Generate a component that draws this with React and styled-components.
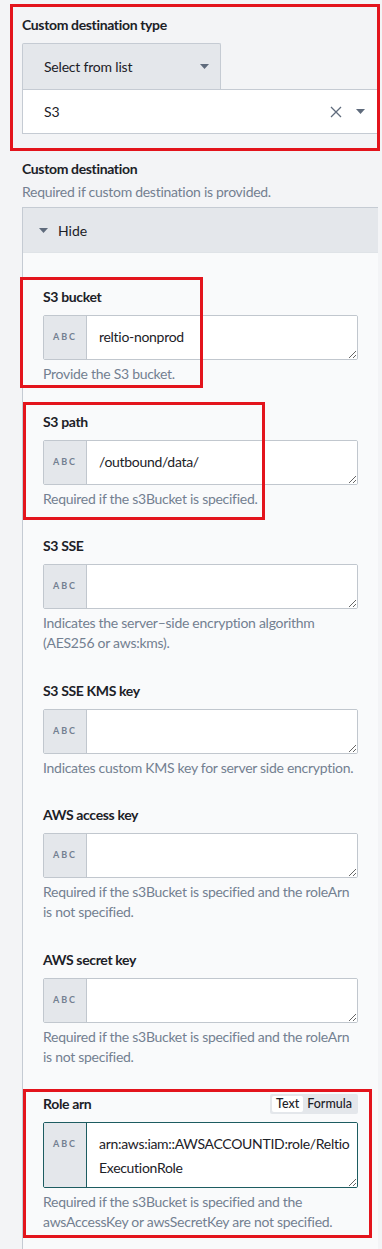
import React from "react";
import styled, { createGlobalStyle } from "styled-components";

const GlobalStyle = createGlobalStyle`
  html, body {
    margin: 0;
    padding: 0;
    background: #f3f4f6;
    font-family: "Lato", "Noto Sans", sans-serif;
    color: #1c2127;
  }
`;

const Page = styled.div`
  width: 356px;
  padding: 15px 4px 0 22px;
`;

// red annotation frame laid over a block, offsets come from props
const Marked = styled.div`
  position: relative;
  &::after {
    content: "";
    position: absolute;
    pointer-events: none;
    left: ${(p) => p.left}px;
    top: ${(p) => p.top}px;
    width: ${(p) => p.w}px;
    height: ${(p) => p.h}px;
    border: 3px solid #e3141c;
    box-sizing: border-box;
  }
`;

const Label = styled.div`
  font-size: 14px;
  font-weight: 700;
  line-height: 20px;
  letter-spacing: -0.35px;
  color: #1c2127;
`;

const LabelRow = styled.div`
  display: flex;
  align-items: center;
  justify-content: space-between;
`;

const Helper = styled.div`
  margin-top: ${(p) => p.gap ?? 4}px;
  font-size: 14px;
  line-height: 20px;
  letter-spacing: -0.28px;
  color: #738091;
`;

const SelectButton = styled.div`
  margin-top: 8px;
  width: 199px;
  height: 46px;
  box-sizing: border-box;
  display: flex;
  align-items: center;
  justify-content: space-between;
  padding: 0 11px 0 21px;
  background: #e4e7eb;
  border: 1px solid #c5cbd3;
  border-bottom: none;
  border-radius: 2px 2px 0 0;
  font-size: 14px;
  letter-spacing: -0.2px;
`;

const SelectInput = styled.div`
  height: 45px;
  box-sizing: border-box;
  display: flex;
  align-items: center;
  padding: 0 12px 0 21px;
  background: #fff;
  border: 1px solid #c5cbd3;
  font-size: 14px;
  letter-spacing: -0.2px;
`;

const SelectValue = styled.span`
  flex: 1;
`;

const IconSlot = styled.span`
  display: inline-flex;
  align-items: center;
  margin-left: ${(p) => p.gap || 0}px;
`;

const Section = styled.div`
  margin-top: 25px;
`;

const Panel = styled.div`
  margin-top: 5px;
  border: 1px solid #c5cbd3;
  border-bottom: none;
  border-right: none;
  background: #f9fafb;
`;

const PanelHeader = styled.div`
  height: 44px;
  display: flex;
  align-items: center;
  gap: 10px;
  padding-left: 16px;
  background: #e4e7eb;
  font-size: 14px;
  border-bottom: 1px solid #dfe3e7;
`;

const PanelBody = styled.div`
  padding: 34px 20px 20px 20px;
  display: flex;
  flex-direction: column;
  gap: 27.5px;
`;

const Field = styled.div`
  display: flex;
  flex-direction: column;
`;

const InputGroup = styled.div`
  margin-top: 8px;
  display: flex;
  height: ${(p) => p.h || 45}px;
  box-sizing: border-box;
  border: 1px solid ${(p) => (p.focused ? "#1d5c61" : "#c1c7ce")};
  border-radius: 2px;
  background: #fff;
  overflow: hidden;
`;

const TypeTag = styled.div`
  width: 43px;
  flex: none;
  display: flex;
  justify-content: center;
  padding-top: 15px;
  box-sizing: border-box;
  background: #e4e7eb;
  border-right: 1px solid ${(p) => (p.focused ? "#1d5c61" : "#c1c7ce")};
  font-size: 9px;
  font-weight: 700;
  letter-spacing: 2px;
  color: #738091;
  line-height: 12px;
`;

const Area = styled.textarea`
  flex: 1;
  border: none;
  outline: none;
  margin: 0;
  padding: 9px 0 9px 12px;
  resize: vertical;
  font-family: "Lato", "Noto Sans", sans-serif;
  font-size: 14px;
  letter-spacing: -0.3px;
  line-height: 24px;
  color: #1c2127;
  background: #fff;
  overflow: hidden;
  white-space: pre;
`;

const Toggle = styled.div`
  display: flex;
  padding: 2px;
  background: #e4e7eb;
  border-radius: 2px;
  font-size: 12.5px;
  line-height: 16px;
`;

const ToggleOption = styled.span`
  padding: 0 4px;
  border-radius: 2px;
  background: ${(p) => (p.active ? "#fff" : "transparent")};
  color: #1c2127;
  font-weight: 500;
`;

const Caret = () => (
  <svg width="9" height="5" viewBox="0 0 9 5">
    <path d="M0 0h9L4.5 5z" fill="#5f6b7c" />
  </svg>
);

const Cross = () => (
  <svg width="12" height="12" viewBox="0 0 12 12">
    <path d="M1 1l10 10M11 1L1 11" stroke="#5f6b7c" strokeWidth="1.3" />
  </svg>
);

const fields = [
  { label: "S3 bucket", value: "reltio-nonprod", help: "Provide the S3 bucket.", mark: { left: -23, top: -10, w: 183, h: 111 } },
  { label: "S3 path", value: "/outbound/data/", help: "Required if the s3Bucket is specified.", mark: { left: -20, top: -10, w: 242, h: 118 } },
  { label: "S3 SSE", value: "", help: "Indicates the server–side encryption algorithm (AES256 or aws:kms)." },
  { label: "S3 SSE KMS key", value: "", help: "Indicates custom KMS key for server side encryption." },
  { label: "AWS access key", value: "", help: "Required if the s3Bucket is specified and the roleArn is not specified." },
  { label: "AWS secret key", value: "", help: "Required if the s3Bucket is specified and the roleArn is not specified." },
];

const TextField = ({ label, value, help }) => (
  <Field>
    <Label>{label}</Label>
    <InputGroup>
      <TypeTag>ABC</TypeTag>
      <Area rows={1} value={value} readOnly />
    </InputGroup>
    <Helper>{help}</Helper>
  </Field>
);

export default function App() {
  return (
    <>
      <GlobalStyle />
      <Page>
        <Marked left={-12} top={-11} w={370} h={147}>
          <Label>Custom destination type</Label>
          <SelectButton>
            <span>Select from list</span>
            <Caret />
          </SelectButton>
          <SelectInput>
            <SelectValue>S3</SelectValue>
            <IconSlot>
              <Cross />
            </IconSlot>
            <IconSlot gap={14}>
              <Caret />
            </IconSlot>
          </SelectInput>
        </Marked>

        <Section>
          <Label>Custom destination</Label>
          <Helper gap={3}>Required if custom destination is provided.</Helper>
          <Panel>
            <PanelHeader>
              <Caret />
              <span>Hide</span>
            </PanelHeader>
            <PanelBody>
              {fields.map((f) =>
                f.mark ? (
                  <Marked key={f.label} {...f.mark}>
                    <TextField {...f} />
                  </Marked>
                ) : (
                  <TextField key={f.label} {...f} />
                )
              )}
              <Marked left={-20} top={-5} w={349} h={149}>
                <Field>
                  <LabelRow>
                    <Label>Role arn</Label>
                    <Toggle>
                      <ToggleOption active>Text</ToggleOption>
                      <ToggleOption>Formula</ToggleOption>
                    </Toggle>
                  </LabelRow>
                  <InputGroup h={66} focused>
                    <TypeTag focused>ABC</TypeTag>
                    <Area
                      rows={2}
                      value={"arn:aws:iam::AWSACCOUNTID:role/Reltio\nExecutionRole"}
                      readOnly
                    />
                  </InputGroup>
                  <Helper>
                    Required if the s3Bucket is specified and the awsAccessKey or
                    awsSecretKey are not specified.
                  </Helper>
                </Field>
              </Marked>
            </PanelBody>
          </Panel>
        </Section>
      </Page>
    </>
  );
}
